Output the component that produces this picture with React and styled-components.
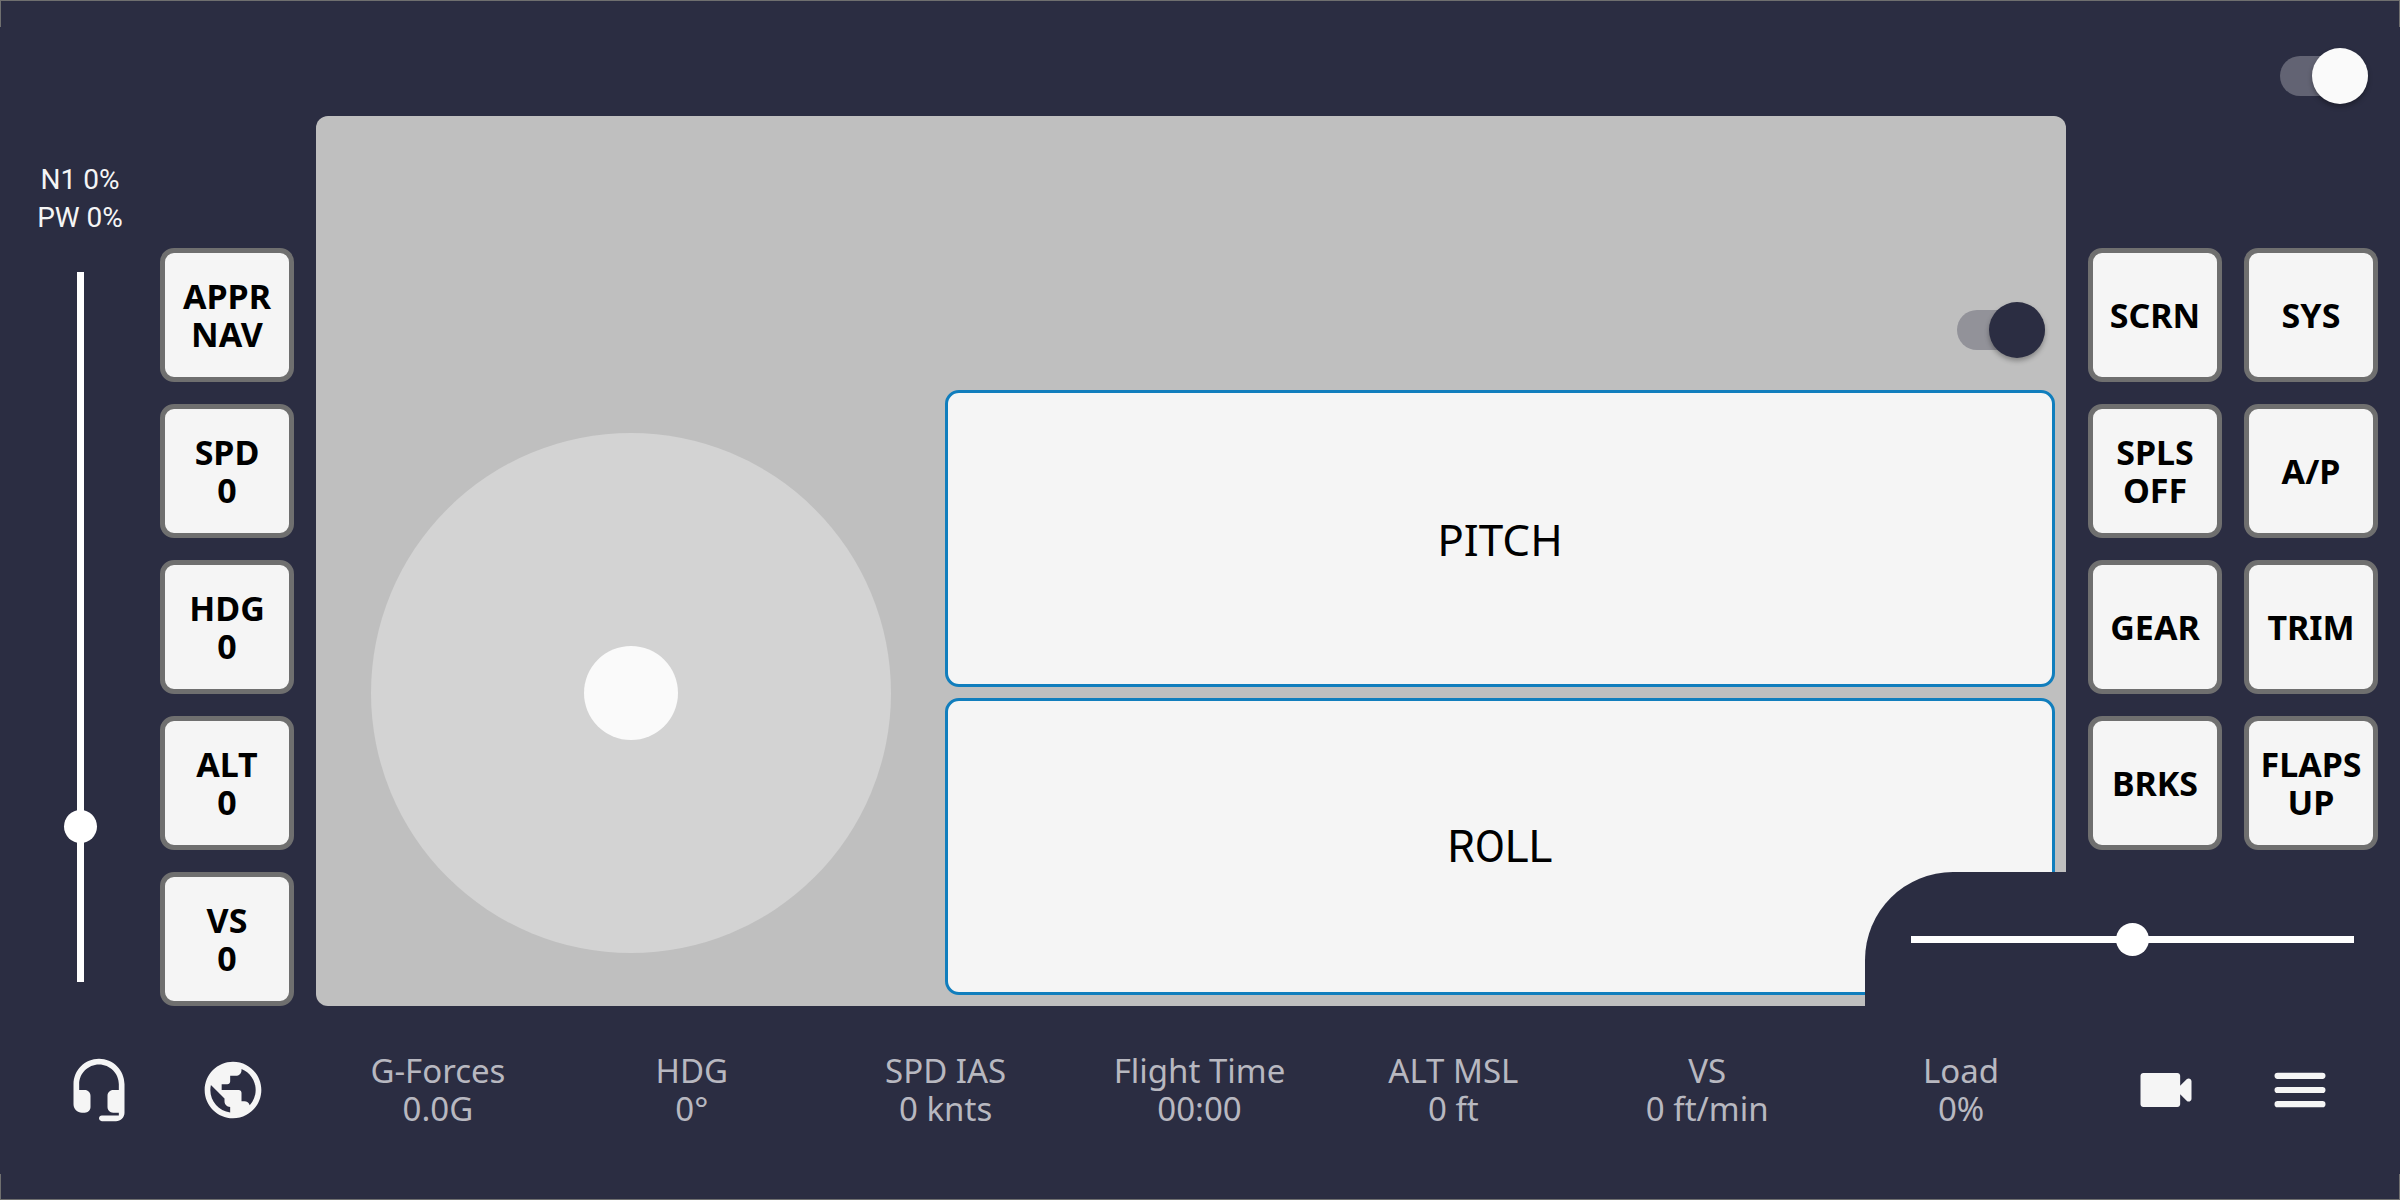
import React from "react";
import styled, { createGlobalStyle } from "styled-components";
import { MdPublic } from "react-icons/md";

const GlobalStyle = createGlobalStyle`
  * {
    box-sizing: border-box;
  }
  body {
    margin: 0;
    background: #2b2d42;
    font-family: "Noto Sans", "Open Sans", sans-serif;
  }
  button {
    font-family: inherit;
    cursor: pointer;
  }
`;

const edge = "linear-gradient(#6f6f6f, #6f6f6f)";

const Screen = styled.div`
  min-height: 100vh;
  display: flex;
  flex-direction: column;
  background:
    ${edge} top / 100% 1px no-repeat,
    ${edge} bottom / 100% 1px no-repeat,
    ${edge} top left / 1px 27px no-repeat,
    ${edge} top right / 1px 27px no-repeat,
    ${edge} bottom left / 1px 26px no-repeat,
    ${edge} bottom right / 1px 26px no-repeat,
    #2b2d42;
`;

const TopBar = styled.header`
  display: flex;
  justify-content: flex-end;
  padding: 48px 32px 12px;
`;

const Switch = styled.input.attrs({ type: "checkbox", role: "switch" })`
  appearance: none;
  display: flex;
  align-items: center;
  justify-content: flex-end;
  width: 88px;
  height: 40px;
  margin: 8px 0;
  background: ${(p) => p.$track};
  border-radius: 20px;
  cursor: pointer;
  &::before {
    content: "";
    flex: none;
    width: 56px;
    height: 56px;
    border-radius: 50%;
    background: ${(p) => p.$thumb};
    box-shadow: 0 3px 5px rgba(0, 0, 0, 0.3);
  }
  &:not(:checked) {
    justify-content: flex-start;
  }
`;

const Deck = styled.main`
  flex: 1;
  display: grid;
  grid-template-columns: 138px 134px minmax(0, 1fr) 290px;
  column-gap: 22px;
  padding-right: 22px;
`;

const Throttle = styled.label`
  display: flex;
  flex-direction: column;
  align-items: center;
  gap: 35px;
  padding: 45px 0 24px;
  margin-right: -22px;
  color: #f5f5f5;
  font: 28px/38px Roboto, sans-serif;
  text-align: center;
`;

const Slider = styled.input.attrs({ type: "range" })`
  appearance: none;
  margin: 0;
  background: linear-gradient(#fff, #fff) center / ${(p) => (p.$vertical ? "7px 100%" : "100% 7px")} no-repeat;
  cursor: pointer;
  &::-webkit-slider-thumb {
    appearance: none;
    width: 33px;
    height: 33px;
    border-radius: 50%;
    background: #fff;
  }
`;

const ThrottleSlider = styled(Slider)`
  flex: 1;
  width: 33px;
  writing-mode: vertical-lr;
  direction: rtl;
`;

const Keys = styled.div`
  display: grid;
  grid-template-columns: repeat(${(p) => p.$columns}, 134px);
  grid-auto-rows: 134px;
  gap: 22px;
  align-content: end;
`;

const Key = styled.button`
  padding: 0;
  border: 5px solid #6f6f6f;
  border-radius: 14px;
  background: #f5f5f5;
  color: #000;
  font-size: 34px;
  font-weight: 700;
  line-height: 38px;
  white-space: pre-line;
`;

const Display = styled.section`
  display: grid;
  grid-template-columns: 629px minmax(0, 1fr);
  grid-template-rows: auto 1fr;
  padding: 178px 11px 11px 0;
  border-radius: 12px;
  background: #bfbfbf;
`;

const DisplayHead = styled.div`
  grid-column: 1 / -1;
  display: flex;
  justify-content: flex-end;
  padding: 8px 10px 32px 0;
`;

const Stick = styled.div`
  align-self: center;
  justify-self: center;
  display: grid;
  place-items: center;
  width: 520px;
  height: 520px;
  border-radius: 50%;
  background: #d3d3d3;
`;

const StickKnob = styled.button`
  width: 94px;
  height: 94px;
  padding: 0;
  border: 0;
  border-radius: 50%;
  background: #fafafa;
`;

const Axes = styled.div`
  display: flex;
  flex-direction: column;
  gap: 11px;
`;

const Axis = styled.button`
  flex: 1;
  border: 3px solid #117ebd;
  border-radius: 14px;
  background: #f5f5f5;
  color: #000;
  font-family: ${(p) => p.$font};
  font-size: 44px;
`;

const RightSide = styled.div`
  display: flex;
  flex-direction: column;
  align-items: flex-end;
  justify-content: flex-end;
`;

const Rudder = styled.div`
  flex: none;
  display: grid;
  align-items: center;
  width: 513px;
  height: 134px;
  margin-top: 22px;
  padding: 0 24px 0 46px;
  border-top-left-radius: 88px;
  background: #2b2d42;
`;

const Footer = styled.footer`
  display: flex;
  align-items: center;
  height: 194px;
  padding: 0 33px 26px 32px;
`;

const IconButton = styled.button`
  display: grid;
  place-items: center;
  width: 134px;
  height: 134px;
  padding: 0;
  border: 0;
  background: none;
  color: #f5f5f5;
`;

const Readouts = styled.ul`
  flex: 1;
  display: grid;
  grid-template-columns: repeat(7, 1fr);
  margin: 0 11px;
  padding: 0;
  list-style: none;
`;

const Readout = styled.li`
  color: #b8b8c0;
  font-size: 33px;
  line-height: 38px;
  text-align: center;
  white-space: pre-line;
`;

const leftKeys = ["APPR\nNAV", "SPD\n0", "HDG\n0", "ALT\n0", "VS\n0"];
const rightKeys = ["SCRN", "SYS", "SPLS\nOFF", "A/P", "GEAR", "TRIM", "BRKS", "FLAPS\nUP"];
const readouts = [
  "G-Forces\n0.0G",
  "HDG\n0°",
  "SPD IAS\n0 knts",
  "Flight Time\n00:00",
  "ALT MSL\n0 ft",
  "VS\n0 ft/min",
  "Load\n0%",
];

const HeadsetIcon = () => (
  <svg width="68" height="68" viewBox="0 0 24 24" fill="currentColor" aria-hidden="true">
    <path d="M12 1c-4.97 0-9 4.03-9 9v7c0 1.66 1.34 3 3 3h1c1.1 0 2-.9 2-2v-4c0-1.1-.9-2-2-2H5v-2c0-3.87 3.13-7 7-7s7 3.13 7 7v2h-2c-1.1 0-2 .9-2 2v4c0 1.1.9 2 2 2h2v1h-6c-.55 0-1 .45-1 1s.45 1 1 1h5c1.66 0 3-1.34 3-3V10c0-4.97-4.03-9-9-9z" />
  </svg>
);

const CameraIcon = () => (
  <svg width="68" height="68" viewBox="0 0 24 24" fill="currentColor" aria-hidden="true">
    <path d="M17 10.5V7c0-.55-.45-1-1-1H4c-.55 0-1 .45-1 1v10c0 .55.45 1 1 1h12c.55 0 1-.45 1-1v-3.5l2.29 2.29c.63.63 1.71.18 1.71-.71V8.91c0-.89-1.08-1.34-1.71-.71L17 10.5z" />
  </svg>
);

const MenuIcon = () => (
  <svg width="68" height="68" viewBox="0 0 24 24" stroke="currentColor" strokeWidth="2.2" strokeLinecap="round" aria-hidden="true">
    <path d="M4.1 7h15.8M4.1 12h15.8M4.1 17h15.8" />
  </svg>
);

const App = () => {
  return (
    <>
      <GlobalStyle />
      <Screen>
        <TopBar>
          <Switch $track="#626373" $thumb="#fafafa" aria-label="Connection" defaultChecked />
        </TopBar>
        <Deck>
          <Throttle>
            <span>
              N1 0%
              <br />
              PW 0%
            </span>
            <ThrottleSlider $vertical max={200} defaultValue={41} />
          </Throttle>
          <Keys $columns={1}>
            {leftKeys.map((label) => (
              <Key key={label}>{label}</Key>
            ))}
          </Keys>
          <Display>
            <DisplayHead>
              <Switch $track="#929299" $thumb="#2b2d42" aria-label="Controls" defaultChecked />
            </DisplayHead>
            <Stick>
              <StickKnob aria-label="Stick" />
            </Stick>
            <Axes>
              <Axis $font="inherit">PITCH</Axis>
              <Axis $font="Roboto, sans-serif">ROLL</Axis>
            </Axes>
          </Display>
          <RightSide>
            <Keys $columns={2}>
              {rightKeys.map((label) => (
                <Key key={label}>{label}</Key>
              ))}
            </Keys>
            <Rudder>
              <Slider aria-label="Rudder" />
            </Rudder>
          </RightSide>
        </Deck>
        <Footer>
          <IconButton aria-label="Radio">
            <HeadsetIcon />
          </IconButton>
          <IconButton aria-label="Map">
            <MdPublic size={68} />
          </IconButton>
          <Readouts>
            {readouts.map((text) => (
              <Readout key={text}>{text}</Readout>
            ))}
          </Readouts>
          <IconButton aria-label="Camera">
            <CameraIcon />
          </IconButton>
          <IconButton aria-label="Menu">
            <MenuIcon />
          </IconButton>
        </Footer>
      </Screen>
    </>
  );
};

export default App;
